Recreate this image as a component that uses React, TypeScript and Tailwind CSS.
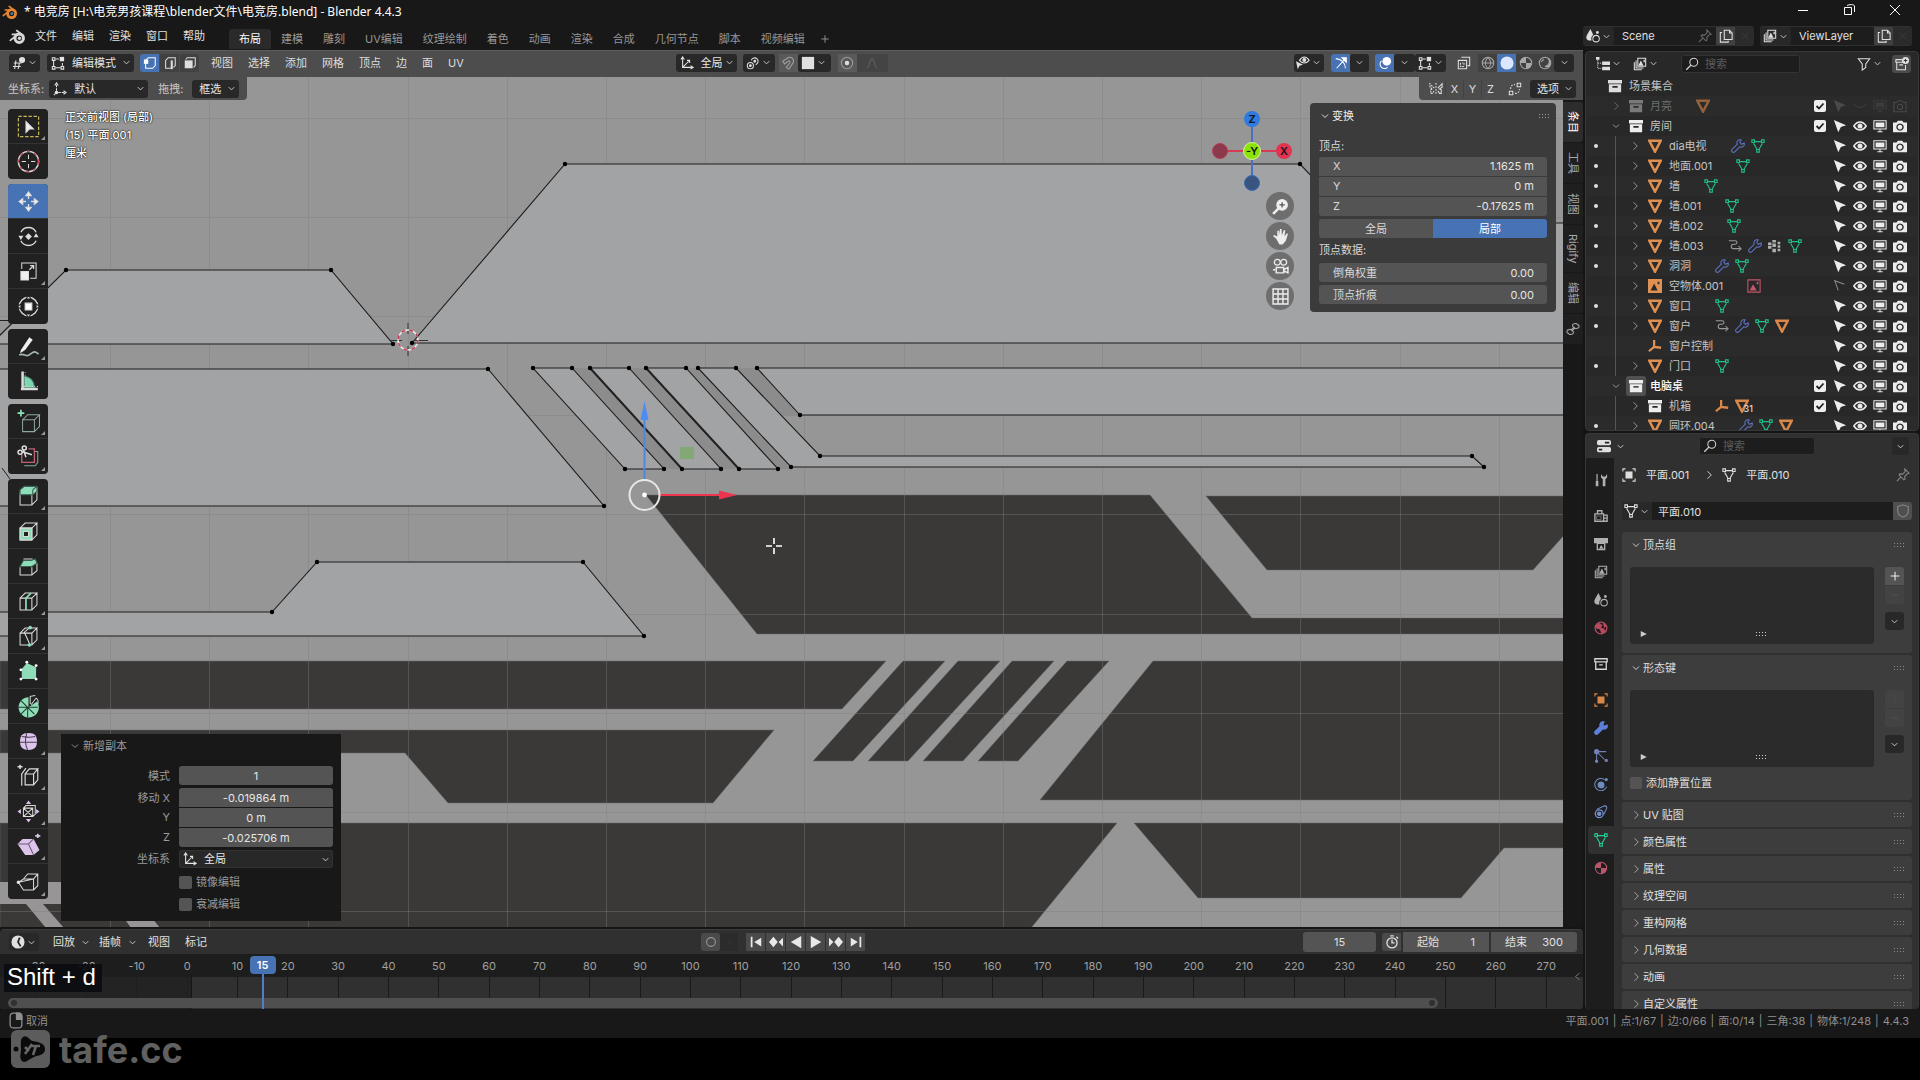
import React from 'react';

/* ---------- icons, all on a 16x16 grid ---------- */

const ICONS: Record<string, React.ReactNode> = {
  down: <path d="M4 6l4 4 4-4" />,
  right: <path d="M6 3l5 5-5 5" />,
  left: <path d="M11 3L5 8l6 5" />,
  play: <path d="M5 4l8 4-8 4z" fill="currentColor" stroke="none" />,
  plus: <path d="M8 3v10M3 8h10" />,
  minus: <path d="M4 8h8" />,
  close: <path d="M4 4l8 8M12 4l-8 8" />,
  search: <g><circle cx="10" cy="6" r="4.5" /><path d="M7 9l-5.5 5.5" strokeWidth="1.6" /></g>,
  pin: <path d="M10 1l5 5-2 .5-3 3 .3 3-1.3 1L3.5 8l1-1.3 3 .3 3-3zM5.5 10.5L1 15" />,
  copy: <g><path d="M6 1.5h6l3 3V12H6z" /><path d="M12 1.5v3h3M3.5 4H1.5v11h9v-1.5" /></g>,
  grid3d: <g><path d="M2 8h9M1 12h9M4.5 5L3 15M8.5 8L7 15" /><circle cx="11.5" cy="4.5" r="3.5" fill="currentColor" stroke="none" /></g>,
  editmode: <g><path d="M3 5v7M5 13.5h6M13 11V8M5 3.5h4" /><path d="M1.5 2h3v3h-3zM1.5 12h3v3h-3zM11.5 12h3v3h-3z" /><path d="M10 1h5v5h-5z" fill="currentColor" stroke="none" /></g>,
  vertexSel: <g><path d="M3 9v5h8l3-3V2H6L3 5" /><path d="M1 4h5v5H1z" fill="currentColor" stroke="none" /></g>,
  edgeSel: <g><path d="M9 14H3V5l3-3h8v9l-2 2" /><path d="M10 5v10" strokeWidth="2.4" /></g>,
  faceSel: <g><path d="M3 4l2-2h9v9l-2 2" /><path d="M2 5h9v9H2z" fill="currentColor" stroke="none" /></g>,
  axes: <g><path d="M3 2v11h11M3 13l7-7" /><path d="M1 4l2-3 2 3M12 11l3 2-3 2M8 5h3v3" /></g>,
  orientation: <g><path d="M4 10V3M6 12h8M3 13l-2 2" strokeDasharray="3 1" /><path d="M2 4l2-3 2 3M12 10l3 2-3 2" /><circle cx="4" cy="12" r="2" fill="currentColor" stroke="none" /></g>,
  pivot: <g><circle cx="5" cy="11" r="3.500" /><circle cx="5" cy="11" r="1" fill="currentColor" /><path d="M6 5a4 4 0 1 1 5 5" /><circle cx="10" cy="6" r="1" fill="currentColor" /></g>,
  magnet: <path d="M2 6l6-4c5-2 8 3 5 7l-4 6-3-2 4-5c1-2-1-3-2-2L4 9z" />,
  square: <path d="M1 1h14v14H1z" fill="currentColor" stroke="none" />,
  proportional: <g><circle cx="8" cy="8" r="6.5" opacity=".5" /><circle cx="8" cy="8" r="2.5" fill="currentColor" stroke="none" /></g>,
  curve: <path d="M2 14c3 0 3-11 6-11s3 11 6 11" />,
  eyeArrow: <g><path d="M4 5c3-5 8-5 11 0-3 4-8 4-11 0z" /><circle cx="9.5" cy="4.5" r="1.7" fill="currentColor" /><path d="M0 6l8 4-4 1-2 4z" fill="currentColor" stroke="none" /></g>,
  gizmo: <g><path d="M2 3c6 0 11 5 11 11M3 14L13 3" /><path d="M9 2h5v5z" fill="currentColor" /></g>,
  overlay: <g><circle cx="10" cy="6" r="5" fill="currentColor" stroke="none" /><path d="M4 5.5a5 5 0 1 0 7 7.5" /></g>,
  xray: <g><path d="M5 1.5h9.5V11H12M1.5 5H11v9.500H1.5z" /><path d="M4 8v4h4M8 10V8H6" strokeDasharray="2 1" /></g>,
  wire: <g><circle cx="8" cy="8" r="6.5" /><path d="M1.5 8h13M8 1.5c-4 4-4 9 0 13M8 1.5c4 4 4 9 0 13" /></g>,
  solid: <circle cx="8" cy="8" r="7.5" fill="currentColor" stroke="none" />,
  material: <g><circle cx="8" cy="8" r="6.5" /><path d="M8 1.5V8h6.5A6.500 6.500 0 0 1 8 14.500V8H1.5A6.500 6.500 0 0 1 8 1.500z" fill="currentColor" stroke="none" /></g>,
  rendered: <g><circle cx="8" cy="8" r="6.5" /><path d="M12 3c2 3 1 8-4 9 7 2 8-5 4-9z" fill="currentColor" /><path d="M4 7a4 4 0 0 1 3-3" /></g>,
  butterfly: <g><path d="M8 1v14" strokeDasharray="2 1.5" /><path d="M6 7L1 2v4l3 2-2 1v4h2l2-3" strokeDasharray="2 1" /><path d="M10 7l5-5v4l-3 2 2 1v4h-2l-2-3" /></g>,
  automerge: <g><path d="M10.5 1.5h4v4h-4zM1.5 10.5h4v4h-4z" /><path d="M3 8c0-4 2-5 5-5M8 13c4 0 5-2 5-5" strokeDasharray="2 1.5" /></g>,
  outliner: <g><path d="M2 1v12h4M2 7h4" strokeWidth="1" strokeDasharray="1.5 1" /><path d="M7 5h9v4H7zM7 11h9v4H7zM0 0h4v3H0z" fill="currentColor" stroke="none" /></g>,
  images: <g><path d="M5.500 1.500h9v9h-9zM3.500 4v8.500H12M1.500 6v8.500H10" /><path d="M6 10l3-6 3 6zM12 3h1.500v3H12z" fill="currentColor" stroke="none" /></g>,
  funnel: <path d="M1.5 2h13L10 8v4l-4 3V8z" />,
  newCollection: <g><path d="M8 3H1v3h9M2 6v8.500h10V9M5 9h4" /><circle cx="12" cy="4" r="4" fill="currentColor" stroke="none" /><path d="M12 2v4M10 4h4" stroke="#333" /></g>,
  collection: <path d="M0 1h16v4H0zM1 6h14v9H1zM5 8v2h6V8z" fill="currentColor" stroke="none" fillRule="evenodd" />,
  collectionLine: <path d="M1 2h14v3.500H1zM2 5.500h12V14H2zM6 9h4" strokeWidth="1.5" />,
  tri: <path d="M1.5 2h13L8 14.500z" strokeWidth="2.8" />,
  mesh: <g><path d="M4 3h8M3 5l4 7M13 5l-4 7" /><path d="M1 1h3v3H1zM12 1h3v3h-3zM6.500 12h3v3h-3z" /></g>,
  wrench: <path d="M15 4.500L12 6 10 4l1.500-3C8 0 6 3 7 6l-6 6c-1 2 1 4 3 3l6-6c3 1 6-1 5-4.500z" />,
  wrenchFill: <path d="M15 4.500L12 6 10 4l1.500-3C8 0 6 3 7 6l-6 6c-1 2 1 4 3 3l6-6c3 1 6-1 5-4.500z" fill="currentColor" />,
  bendy: <g><path d="M1 2h7c3 0 3 4 0 4H6c-3 0-3 5 0 5h8" /><path d="M12 8l3 3-3 3" /></g>,
  grid9: <path d="M0 4h4v3H0zM0 8h4v3H0zM5 1h4v3H5zM5 5h4v4H5zM5 11h4v4H5zM11 3h3v3h-3zM11 7h3v3h-3zM11 11h3v3h-3z" fill="currentColor" stroke="none" />,
  empty: <path d="M7 1v8l8 1M7 9l-6 5" strokeWidth="2.6" />,
  imageFill: <path d="M0 0h16v16H0zM3 13l4-8 4 8zM11 3h2v3h-2z" fill="currentColor" stroke="none" fillRule="evenodd" />,
  imageLine: <g><path d="M1 1h14v14H1z" /><path d="M3 13l4-7 4 7zM11 3h2v3h-2z" fill="currentColor" stroke="none" /></g>,
  cursor: <path d="M1 1l14 6-6 2-3 6z" fill="currentColor" stroke="none" />,
  cursorLine: <path d="M13 6L2 2l4 11" />,
  eye: <g><path d="M1 8c4-6 10-6 14 0-4 6-10 6-14 0z" strokeWidth="1.8" /><circle cx="8" cy="8" r="2.300" fill="currentColor" /></g>,
  eyeClosed: <path d="M1 6c4 5 10 5 14 0" />,
  monitor: <g><path d="M1 2h14v9.500H1zM5 14.500h6M8 12v2" /><path d="M3 4h10v5.500H3z" fill="currentColor" stroke="none" /></g>,
  camera: <path d="M0 4h4l1.500-2h5L12 4h4v11H0zM8 5a4.200 4.200 0 1 0 .1 0zM8 6.500a2.700 2.700 0 1 1-.1 0z" fill="currentColor" stroke="none" fillRule="evenodd" />,
  cameraLine: <g><path d="M1 4h3l2-2h4l2 2h3v10.500H1z" /><circle cx="8" cy="9" r="3" /></g>,
  props: <g fill="currentColor" stroke="none"><rect x="0" y="1" width="16" height="6" rx="2" /><rect x="0" y="9" width="16" height="6" rx="2" /><path d="M9 3h5v2H9zM2 11h4v2H2z" fill="#222" /></g>,
  object: <g><path d="M1 4V1h3M12 1h3v3M15 12v3h-3M4 15H1v-3" /><path d="M4 4h8v8H4z" fill="currentColor" stroke="none" /></g>,
  shield: <path d="M8 1l6 2v5c0 4-3 6-6 7-3-1-6-3-6-7V3z" />,
  tools: <g><path d="M3.500 1v8" strokeWidth="1.4" /><path d="M2 9h3v6H2z" fill="currentColor" stroke="none" /><path d="M8 1v4l2 2v8h3V7l2-2V1l-2 3h-3z" fill="currentColor" stroke="none" /></g>,
  render: <g><path d="M1 5.500h10V14H1zM4 5V2h5v3M11 7h4v7h-4M11 10.500h4" strokeWidth="1.5" /><path d="M3 8h5v4H3z" opacity=".5" /></g>,
  output: <path d="M0 1h16v6h-3v8H3V7H0zM4.500 8v5.500h7V8zM6 13l2-4 3 4z" fill="currentColor" stroke="none" fillRule="evenodd" />,
  scene: <g><path d="M5 0l4 8c1 3-1 5-3 5H3c-3-1-3-4-2-6z" fill="currentColor" stroke="none" /><circle cx="11.500" cy="11" r="4" stroke="#1d1d1d" strokeWidth="3" /><circle cx="11.500" cy="11" r="3.700" /><circle cx="13" cy="4" r="1.600" fill="currentColor" stroke="none" /></g>,
  world: <g><circle cx="8" cy="8" r="6.7" strokeWidth="1.5" /><path d="M2 5l4-2 3 2-2 3 4 1 2 3-4 2-2-5-4-1zM11 3l3 2-2 2z" fill="currentColor" /></g>,
  particles: <g><circle cx="3" cy="3" r="2.400" fill="currentColor" /><path d="M5 3h9M3 5v8M5 5l7 7" /><circle cx="3" cy="14" r="1.300" fill="currentColor" /><circle cx="14" cy="13" r="1.300" fill="currentColor" /></g>,
  physics: <g><circle cx="8" cy="9" r="3.400" fill="currentColor" /><path d="M12 3A7 7 0 1 0 14.500 11" /><circle cx="14" cy="3" r="1.200" fill="currentColor" /></g>,
  constraint: <g><circle cx="6" cy="10" r="4.500" strokeWidth="1.5" /><circle cx="6" cy="10" r="2" fill="currentColor" /><path d="M3 5l9-4c3 0 3 2 2 4l-3 6" /></g>,
  clock: <g><circle cx="8" cy="8" r="7.500" fill="currentColor" stroke="none" /><path d="M10 3L8 8l3 5" stroke="#222" strokeWidth="2" /></g>,
  circle: <circle cx="8" cy="8" r="5" />,
  first: <path d="M2 2h2v12H2zM14 3v10L6 8z" fill="currentColor" stroke="none" />,
  last: <path d="M12 2h2v12h-2zM2 3v10l8-5z" fill="currentColor" stroke="none" />,
  prevKey: <path d="M5 2l5 6-5 6-5-6zM16 3v10l-5-5z" fill="currentColor" stroke="none" />,
  nextKey: <path d="M11 2l5 6-5 6-5-6zM0 3v10l5-5z" fill="currentColor" stroke="none" />,
  back: <path d="M14 1v14L2 8z" fill="currentColor" stroke="none" />,
  fwd: <path d="M2 1v14l12-7z" fill="currentColor" stroke="none" />,
  stopwatch: <g><circle cx="8" cy="9" r="5.800" strokeWidth="1.5" /><path d="M8 5v4h3M6 1h4M13 2l2 2" strokeWidth="1.5" /></g>,
  mouse: <g><rect x="2" y="1" width="11" height="14" rx="3" /><path d="M8 1h2c2 0 3 1 3 3v3H8z" fill="currentColor" /></g>,
  zoom: <g><circle cx="9.500" cy="6.500" r="5.500" fill="currentColor" stroke="none" /><path d="M6 10l-5 5" strokeWidth="2.4" /><path d="M9.500 4v5M7 6.500h5" stroke="#555" /></g>,
  hand: <path d="M4 10L1 7.500l1-1L5 8V2.500h1.500V7L7.500 1H9l.3 6L11 2h1.500l-.8 6L14 5l1 .7-2 6.300-3 3.500H7z" fill="currentColor" stroke="none" />,
  cameraView: <g><circle cx="5" cy="4" r="2.800" /><circle cx="11" cy="4" r="2.800" /><path d="M4 9h7v5H4zM11 11l4-2v5l-4-2M1 11h2" strokeWidth="1.4" /></g>,
  grid: <path d="M1 1h14v14H1zM1 5.700h14M1 10.300h14M5.700 1v14M10.300 1v14" strokeWidth="1.3" />,
  bone: <path d="M10 2a2 2 0 0 1 3 1 2 2 0 0 1 0 4 2 2 0 0 1-3 0l-3 3a2 2 0 0 1-1 4 2 2 0 0 1-3-1 2 2 0 0 1 0-4 2 2 0 0 1 3 0l3-3a2 2 0 0 1 1-4z" />,
};

function Icon({ name, className = '', size = 14 }: { name: string; className?: string; size?: number }) {
  return (
    <svg width={size} height={size} viewBox="0 0 16 16" fill="none" stroke="currentColor" strokeWidth="1.2" className={`shrink-0 ${className}`} aria-hidden="true">
      {ICONS[name]}
    </svg>
  );
}

function Grip({ className = 'text-[#7a7a7a]' }: { className?: string }) {
  return (
    <svg width="12" height="6" viewBox="0 0 12 6" fill="currentColor" className={`shrink-0 ${className}`} aria-hidden="true">
      {[0, 3, 6, 9].map((x) => [1, 4].map((y) => <rect key={`${x}-${y}`} x={x} y={y} width="1" height="1" />))}
    </svg>
  );
}

function BlenderLogo({ size, blue, main }: { size: number; blue: string; main: string }) {
  return (
    <svg width={size} height={size} viewBox="0 0 20 20" fill="none" stroke={main} strokeLinecap="round" aria-hidden="true">
      <circle cx="12" cy="12" r="5" strokeWidth="3.5" />
      <circle cx="12.300" cy="12" r="2" fill={blue} stroke="none" />
      <path d="M9 3l8 6M4 7.500h8M1.500 14.500L9 8.500" strokeWidth="2" />
    </svg>
  );
}

/* ---------- small controls ---------- */

function IconButton({ name, label, className = '' }: { name: string; label: string; className?: string }) {
  return (
    <button type="button" aria-label={label} className={`flex h-[18px] w-[19px] items-center justify-center ${className}`}>
      <Icon name={name} />
    </button>
  );
}

function Drop({ name, label, className = 'w-[30px]' }: { name?: string; label: string; className?: string }) {
  return (
    <button type="button" aria-label={label} className={`flex h-[18px] items-center justify-center gap-px rounded-[3px] bg-[#282828] text-[#e0e0e0] ${className}`}>
      {name && <Icon name={name} />}
      <Icon name="down" size={11} />
    </button>
  );
}

function Select({ icon, label, value, className = '' }: { icon?: string; label: string; value: string; className?: string }) {
  return (
    <span className={`relative flex h-[18px] items-center rounded-[3px] bg-[#282828] text-[#e5e5e5] ${className}`}>
      {icon && <Icon name={icon} className="ml-1" />}
      <select aria-label={label} defaultValue={value} className="h-full w-full min-w-0 appearance-none bg-transparent pl-[7px] outline-none">
        <option>{value}</option>
      </select>
      <Icon name="down" size={11} className="pointer-events-none absolute right-[2px]" />
    </span>
  );
}

/* ---------- window chrome ---------- */

const MENUS = ['文件', '编辑', '渲染', '窗口', '帮助'];
const WORKSPACES = ['布局', '建模', '雕刻', 'UV编辑', '纹理绘制', '着色', '动画', '渲染', '合成', '几何节点', '脚本', '视频编辑'];

function TitleBar() {
  return (
    <header className="flex h-6 shrink-0 items-center bg-[#181818] pl-[2px] pb-px text-white">
      <BlenderLogo size={16} blue="#3c78b4" main="#e8862e" />
      <span className="ml-[6px] font-['Noto_Sans','Noto_Sans_CJK_SC',sans-serif] text-xs">* 电竞房 [H:\电竞男孩课程\blender文件\电竞房.blend] - Blender 4.4.3</span>
      <div className="ml-auto flex pr-[2px] pb-1">
        <button type="button" aria-label="最小化" className="flex h-5 w-[46px] items-center justify-center"><svg width="10" height="10" stroke="currentColor"><path d="M0 5.500h10" /></svg></button>
        <button type="button" aria-label="还原" className="flex h-5 w-[46px] items-center justify-center"><svg width="11" height="11" stroke="currentColor" fill="none"><path d="M.5 3.500h7v7h-7zM3 1.500C5 .5 10 0 10.500 2v6" /></svg></button>
        <button type="button" aria-label="关闭" className="flex h-5 w-[46px] items-center justify-center"><svg width="10" height="10" stroke="currentColor"><path d="M0 0l10 10M10 0L0 10" /></svg></button>
      </div>
    </header>
  );
}

function IdField({ icon, label, value, pin, className }: { icon: string; label: string; value: string; pin?: boolean; className: string }) {
  return (
    <div className={`flex h-5 items-center overflow-hidden rounded-[3px] bg-[#1d1d1d] text-[#e0e0e0] ring-1 ring-[#303030] ring-inset ${className}`}>
      <Drop name={icon} label={label} className="w-[31px]" />
      <input aria-label={label} defaultValue={value} className="min-w-0 flex-1 bg-transparent pl-2 outline-none" />
      {pin && <Icon name="pin" className="mr-1 text-[#6a6a6a]" />}
      <IconButton name="copy" label="新建" className="bg-[#404040]" />
      <IconButton name="close" label="删除" className="bg-[#2b2b2b] text-[#393939]" />
    </div>
  );
}

function MenuBar() {
  return (
    <nav className="flex h-[26px] shrink-0 items-center bg-[#181818] text-[#e0e0e0]">
      <button type="button" aria-label="Blender" className="ml-[9px] mr-[9px] pb-[2px]"><BlenderLogo size={17} blue="#d8d8d8" main="#d8d8d8" /></button>
      <div className="flex gap-[15px] pb-[2px]">
        {MENUS.map((m) => <button type="button" key={m}>{m}</button>)}
      </div>
      <div className="ml-6 flex pt-1 text-[#979797]">
        {WORKSPACES.map((w, i) => (
          <button type="button" key={w} className={`h-5 rounded-t-[3px] px-[10px] ${i === 0 ? 'bg-[#2a2a2a] text-white' : ''}`}>{w}</button>
        ))}
        <button type="button" aria-label="添加工作区" className="px-1"><Icon name="plus" size={12} /></button>
      </div>
      <div className="ml-auto flex gap-[6px] pr-2 pb-[2px]">
        <IdField icon="scene" label="场景" value="Scene" pin className="w-[171px]" />
        <IdField icon="images" label="视图层" value="ViewLayer" className="w-[152px]" />
      </div>
    </nav>
  );
}

/* ---------- 3D viewport drawing ---------- */

const DARK_SHAPES = [
  '646,495 1150,495 1252,618 1590,618 1590,634 757,634',
  '1206,496 1590,496 1584,513 1533,570 1267,570',
  '0,661 886,661 842,709 0,709',
  '0,730 774,730 713,803 448,803 405,753 0,753',
  '903,661 945,661 853,761 813,761',
  '958,661 1000,661 908,761 868,761',
  '1012,661 1054,661 963,761 923,761',
  '1067,661 1109,661 1018,761 978,761',
  '1153,661 1590,661 1590,800 1040,800',
  '0,823 1117,823 1031,928 0,928',
  '1134,823 1590,823 1590,848 1504,848 1461,898 1198,898',
];

const MESH_FACES = [
  '-9,344 66,270 331,270 393,344',
  '412,343 565,164 1300,164 1356,223 1590,223 1590,343',
  '-9,369 488,369 604,506 -9,506',
  '-9,612 272,612 317,562 583,562 644,636 -9,636',
  '533,368 572,368 664,469 625,469',
  '590,368 629,368 721,469 682,469',
  '646,368 686,368 778,469 739,469',
  '698,368 736,368 820,456 1472,456 1484,467 791,467',
  '757,368 1590,368 1590,415 800,415',
];

const VERTICES = [
  [66, 270], [331, 270], [393, 344], [412, 343], [565, 164], [1300, 164], [488, 369], [604, 506],
  [272, 612], [317, 562], [583, 562], [644, 636], [533, 368], [572, 368], [664, 469], [625, 469],
  [590, 368], [629, 368], [721, 469], [682, 469], [646, 368], [686, 368], [778, 469], [739, 469],
  [698, 368], [736, 368], [820, 456], [1472, 456], [1484, 467], [791, 467], [757, 368], [800, 415],
];

function Canvas() {
  return (
    <svg className="absolute inset-0 h-full w-full" viewBox="0 50 1583 877" preserveAspectRatio="xMinYMin slice" aria-hidden="true">
      <rect x="0" y="50" width="1590" height="900" fill="#969696" />
      <g fill="#3b3938" stroke="#6a6969" strokeOpacity=".5">
        {DARK_SHAPES.map((p) => <polygon key={p} points={p} />)}
      </g>
      <g fill="#979595">
        <polygon points="0,882 62,882 62,904 43,904 64,928 46,928 26,904 0,904" />
        <polygon points="124,918 152,918 160,928 131,928" />
      </g>
      <g stroke="#7c7c7c" strokeOpacity=".4">
        {Array.from({ length: 15 }, (_, i) => <path key={i} d={`M${Math.round(110 + i * 99.2)}.5 50V928`} />)}
        {Array.from({ length: 9 }, (_, i) => <path key={i} d={`M0 ${Math.round(118 + i * 99.1)}.5H1590`} />)}
      </g>
      <g fill="#8c8c8c">
        <polygon points="572,368 590,368 682,469 664,469" />
        <polygon points="629,368 646,368 739,469 721,469" />
        <polygon points="686,368 698,368 791,469 778,469" />
        <polygon points="736,368 757,368 800,415 781,415" />
      </g>
      <g fill="#a1a3a4" stroke="#1c1c1c" strokeWidth="1.1">
        {MESH_FACES.map((p) => <polygon key={p} points={p} />)}
      </g>
      <g stroke="#222" strokeWidth="2">
        <path d="M590 368l92 101M646 368l93 101" />
      </g>
      <path d="M0 320.500h9M2 468l8 11" stroke="#222" />
      <g fill="#000">
        {VERTICES.map(([x, y]) => <circle key={`${x},${y}`} cx={x} cy={y} r="2.2" />)}
      </g>

      {/* 3D cursor */}
      <path d="M408 323v11M408 346v10M391 340.500h11M414 340.500h14" stroke="#333" />
      <circle cx="408" cy="340" r="10" fill="none" stroke="#eee" strokeWidth="1.4" />
      <circle cx="408" cy="340" r="10" fill="none" stroke="#c2354b" strokeWidth="1.4" strokeDasharray="4 4" />

      {/* move gizmo */}
      <path d="M644.500 479v-60" stroke="#4e86e4" strokeWidth="2" />
      <polygon points="640.500,420 648.500,420 644.500,401" fill="#4e8bf5" />
      <path d="M660 495h62" stroke="#ee3550" strokeWidth="2" />
      <polygon points="719,490.500 719,499.500 737,495" fill="#ee3550" />
      <rect x="680" y="447" width="14" height="12" fill="#79a965" fillOpacity=".75" />
      <circle cx="644.500" cy="495" r="15" fill="none" stroke="#e8e8e8" strokeWidth="2" />
      <circle cx="644.500" cy="495" r="2.4" fill="#fff" />
      <path d="M774 538v6M774 548v6M766 546h6M776 546h6" stroke="#fff" strokeWidth="1.6" />
    </svg>
  );
}

function AxisGizmo() {
  return (
    <svg width="84" height="84" viewBox="0 0 84 84" aria-label="坐标轴" className="text-[11px] font-semibold">
      <path d="M42 10v64" stroke="#4a6fc0" strokeWidth="2" />
      <path d="M10 42h64" stroke="#d73a55" strokeWidth="2" />
      <circle cx="42" cy="10" r="8" fill="#2f7be0" />
      <circle cx="42" cy="74" r="7.5" fill="#3a5480" stroke="#3a68b8" />
      <circle cx="10" cy="42" r="7.5" fill="#8a3a4c" stroke="#b83a52" />
      <circle cx="74" cy="42" r="8" fill="#e23350" />
      <circle cx="42" cy="42" r="8.5" fill="#8be30a" stroke="#d6f59a" />
      <g fill="#10151c" textAnchor="middle">
        <text x="42" y="14">Z</text>
        <text x="74" y="46">X</text>
        <text x="42" y="46">-Y</text>
      </g>
    </svg>
  );
}

/* ---------- toolbar ---------- */

const cube = <path d="M6 12h14v14H6zM6 12l6-6h14l-6 6M26 6v14l-6 6" />;

const TOOLS: { label: string; more?: boolean; art: React.ReactNode }[][] = [
  [
    { label: '框选', more: true, art: <g><rect x="4" y="4" width="24" height="24" stroke="#c8b85a" strokeWidth="1.4" strokeDasharray="4 2" /><path d="M13 10v13l4-4h5z" fill="#eee" /></g> },
    { label: '游标', art: <g><circle cx="16" cy="16" r="12" strokeWidth="1.6" /><circle cx="16" cy="16" r="12" stroke="#c05060" strokeWidth="1.6" strokeDasharray="4 5" /><path d="M16 8v5M16 19v5M8 16h5M19 16h5" /></g> },
  ],
  [
    { label: '移动', art: <path d="M16 9v4M16 19v4M9 16h4M19 16h4M16 5l-3 4h6zM16 27l-3-4h6zM5 16l4-3v6zM27 16l-4-3v6z" fill="#fff" strokeWidth="1.6" /> },
    { label: '旋转', art: <g><path d="M7 11a10 10 0 0 1 18 0M25 21a10 10 0 0 1-18 0" strokeWidth="1.6" /><path d="M16 12l4 4-4 4-4-4zM4 15h6l-3 5zM28 17h-6l3-5z" fill="#ddd" stroke="none" /></g> },
    { label: '缩放', more: true, art: <g><path d="M8 13V6h17v18h-7" /><path d="M7 16h9v10H7z" fill="#eee" /><path d="M17 14l5-5M18 9h4v4" strokeWidth="1.5" /></g> },
    { label: '变换', art: <g><circle cx="16" cy="16" r="11" strokeWidth="1.6" /><path d="M12 12h8v8h-8z" fill="#fff" /><path d="M16 3l-3 4h6zM16 29l-3-4h6zM3 16l4-3v6zM29 16l-4-3v6z" fill="#ddd" stroke="#222" /></g> },
  ],
  [
    { label: '标注', more: true, art: <g><path d="M7 20L17 5l4 3-9 12-6 4z" fill="#eee" stroke="none" /><path d="M5 26c5-3 8 3 12 0s6-6 11-1" strokeWidth="2" stroke="#a8b8b0" /></g> },
    { label: '测量', art: <g><path d="M11 23V10c7 0 12 6 12 13z" fill="#7fd6ae" stroke="#4a8a72" /><path d="M9 4v22M7 25h20" strokeWidth="3" /><path d="M12 5v18M11 22h16" strokeDasharray="1 2" /></g> },
  ],
  [
    { label: '添加立方体', more: true, art: <g><g stroke="#8fa89a" transform="translate(3 2)">{cube}</g><path d="M7 2v8M3 6h8" stroke="#8fe3b8" strokeWidth="2" /></g> },
    { label: '切割', more: true, art: <g><path d="M11 27h13l3-4V10h-4" stroke="#7fae98" /><path d="M8 12v11h15V7h-7" stroke="#c06070" strokeWidth="1.6" /><path d="M8 10l12 4M10 8l3 9" strokeWidth="1.8" /><circle cx="6" cy="11" r="2.4" strokeWidth="1.8" /><circle cx="11" cy="6" r="2.4" strokeWidth="1.8" /></g> },
  ],
  [
    { label: '挤出', more: true, art: <g>{cube}<path d="M6 8l5-4h15v6l-5 4H6zM21 8v6M21 8l5-4" fill="#8fdcb8" stroke="#3a5f50" /></g> },
    { label: '内插面', art: <g>{cube}<path d="M6 12h14v14H6zM10 16v6h6v-6z" fill="#8fdcb8" fillRule="evenodd" /></g> },
    { label: '倒角', art: <g><path d="M6 17v9h14v-9M20 26l6-5v-9M10 7h11" /><path d="M6 16l4-7h9l5-2 2 5-6 4z" fill="#8fdcb8" stroke="#3a5f50" /></g> },
    { label: '环切', more: true, art: <g>{cube}<path d="M13 26V12l6-6" stroke="#8fdcb8" strokeWidth="2" /></g> },
    { label: '切刀', more: true, art: <g>{cube}<path d="M18 5l-7 6 7 15" /><circle cx="18" cy="5.5" r="1.5" fill="#8fdcb8" stroke="#8fdcb8" /><circle cx="17" cy="26" r="1.5" fill="#8fdcb8" stroke="#8fdcb8" /></g> },
    { label: '多边形建形', art: <g><path d="M8 13l6-7 11 5v14H8z" fill="#8fdcb8" stroke="none" /><g fill="#fff" stroke="none"><circle cx="7" cy="14" r="1.7" /><circle cx="14" cy="5" r="1.7" /><circle cx="25" cy="9" r="1.7" /><circle cx="25" cy="25" r="1.7" /><circle cx="7" cy="25" r="1.7" /></g></g> },
    { label: '旋绕', art: <g><path d="M16 17V5a12 12 0 1 0 10 5z" fill="#8fdcb8" stroke="none" /><path d="M15 17v12M15 17H4M15 17h12M15 17l-8 8M15 17l8 8M15 17L7 9" stroke="#23382f" /><path d="M18 13V4l6-1M19 14l6-8c3 2 3 4 2 7" /></g> },
    { label: '平滑', more: true, art: <g><path d="M16 6c8 0 10 4 10 10s-2 10-10 10S6 22 6 16 8 6 16 6z" fill="#dcc4ea" stroke="none" /><path d="M6 17h20M14 6c-2 6-2 14 1 20M8 10c5 1 12 1 16 0" stroke="#4a3f52" /></g> },
    { label: '滑移边线', more: true, art: <g><path d="M12 13h10v13H12zM12 13l5-6h10l-5 6M27 7v13l-5 6M8 27V13l5-7" strokeWidth="1.4" /><path d="M6 2v5M3 4.500h6" strokeWidth="1.8" /></g> },
    { label: '法向缩放', more: true, art: <g><path d="M10 12h11v10H10zM10 12l3-3h11v10l-3 3M10 12l11 10M21 12L10 22" /><path d="M16 3l-3 4h6zM16 29l-3-4h6zM3 16l4-3v6zM29 16l-4-3v6z" fill="#dcc4ea" stroke="none" /></g> },
    { label: '切变', more: true, art: <g><path d="M3 13l6-6h13l7 13-7 6H12z" fill="#dcc4ea" stroke="none" /><path d="M3 13h13l6 13M16 13l6-6" stroke="#6a5a74" /><path d="M27 1v5M24 3.500h6" stroke="#dcc4ea" strokeWidth="2" /></g> },
    { label: '断离区域', more: true, art: <g><path d="M4 17l6 9h12l5-5V7H15l-5 6M22 26V13l5-6M4 17l6-4h12M4 17l18-4" /><circle cx="4" cy="17" r="1.5" fill="#fff" /></g> },
  ],
];

function Toolbar() {
  return (
    <div className="ml-2 mt-[9px] flex w-10 shrink-0 flex-col gap-[5px]">
      {TOOLS.map((group, g) => (
        <div key={g} className="flex flex-col divide-y divide-[#333] overflow-hidden rounded-[4px] bg-[#212121]">
          {group.map((t) => (
            <button key={t.label} type="button" aria-label={t.label} className={`relative flex h-[35px] items-center justify-center ${t.label === '移动' ? 'bg-[#4772b3]' : ''}`}>
              <svg width="27" height="27" viewBox="0 0 32 32" fill="none" stroke="#dcdcdc" strokeWidth="1.2" aria-hidden="true">{t.art}</svg>
              {t.more && <svg width="4" height="4" className="absolute bottom-[3px] right-[3px]"><path d="M4 0v4H0z" fill="#999" /></svg>}
            </button>
          ))}
        </div>
      ))}
    </div>
  );
}

/* ---------- viewport ---------- */

const VIEW_MENUS = ['视图', '选择', '添加', '网格', '顶点', '边', '面', 'UV'];

function ViewportHeader() {
  return (
    <>
      <div className="flex h-[27px] items-center border-t border-[#5e5e5e] bg-[#4d4d4d] px-[9px] pb-[3px] text-[#dedede]">
        <div className="flex flex-1 items-center">
          <Drop name="grid3d" label="编辑器类型" className="w-[31px]" />
          <Select icon="editmode" label="模式" value="编辑模式" className="ml-[7px] w-[87px]" />
          <div className="ml-[6px] flex gap-px">
            <IconButton name="vertexSel" label="点选择" className="rounded-l-[3px] bg-[#4772b3] text-white" />
            <IconButton name="edgeSel" label="边选择" className="bg-[#414141]" />
            <IconButton name="faceSel" label="面选择" className="rounded-r-[3px] bg-[#414141]" />
          </div>
          <div className="ml-3 flex gap-[15px]">
            {VIEW_MENUS.map((m) => <button type="button" key={m}>{m}</button>)}
          </div>
        </div>
        <div className="mr-5 flex items-center">
          <Select icon="axes" label="变换坐标系" value="全局" className="w-[61px]" />
          <Drop name="pivot" label="轴心点" className="ml-[6px] w-[32px]" />
          <IconButton name="magnet" label="吸附" className="ml-[4px] bg-[#5a5a5a] text-[#a0a0a0]" />
          <Drop name="square" label="吸附到" className="w-[33px]" />
          <IconButton name="proportional" label="衰减编辑" className="ml-[7px] bg-[#5a5a5a]" />
          <span className="flex h-[18px] w-[31px] items-center justify-center bg-[#444] text-[#5e5e5e]"><Icon name="curve" /></span>
        </div>
        <div className="flex flex-1 items-center justify-end">
          <Drop name="eyeArrow" label="可选性与可见性" />
          <IconButton name="gizmo" label="显示 Gizmo" className="ml-[7px] rounded-l-[3px] bg-[#4772b3] text-white" />
          <Drop label="Gizmo" className="w-[19px]" />
          <IconButton name="overlay" label="显示叠加层" className="ml-[6px] rounded-l-[3px] bg-[#4772b3] text-white" />
          <Drop label="叠加层" className="w-[21px]" />
          <Drop name="editmode" label="编辑模式叠加层" className="w-[31px]" />
          <IconButton name="xray" label="透视模式" className="ml-2" />
          <div className="ml-[5px] flex">
            <IconButton name="wire" label="线框" className="bg-[#414141] text-[#a8a8a8]" />
            <IconButton name="solid" label="实体" className="bg-[#4772b3] text-[#dbe6ff]" />
            <IconButton name="material" label="材质预览" className="bg-[#414141] text-[#a8a8a8]" />
            <IconButton name="rendered" label="渲染" className="bg-[#414141] text-[#a8a8a8]" />
            <Drop label="着色方式" className="w-[20px]" />
          </div>
        </div>
      </div>
      <div className="flex justify-between text-[#dedede]">
        <div className="flex h-[23px] items-center rounded-br-[4px] bg-[#4d4d4d] px-2">
          <span className="text-[#c8c8c8]">坐标系:</span>
          <Select icon="orientation" label="坐标系" value="默认" className="ml-[5px] w-[99px]" />
          <span className="ml-[10px] text-[#c8c8c8]">拖拽:</span>
          <Select label="拖拽" value="框选" className="ml-[9px] w-[47px]" />
        </div>
        <div className="flex h-[23px] items-center rounded-bl-[4px] bg-[#4d4d4d] px-[7px]">
          <IconButton name="butterfly" label="镜像" />
          {['X', 'Y', 'Z'].map((a) => (
            <button type="button" key={a} className="h-[18px] w-[18px] border-l border-[#424242]">{a}</button>
          ))}
          <IconButton name="automerge" label="自动合并" className="ml-[6px]" />
          <Select label="选项" value="选项" className="ml-[6px] w-[46px]" />
        </div>
      </div>
    </>
  );
}

function SidePanel() {
  return (
    <section className="mt-[3px] h-[209px] w-[246px] shrink-0 rounded-[4px] bg-[#3b3b3b] px-[9px] text-[#d8d8d8]">
      <h2 className="flex h-[26px] items-center text-[#eee]">
        <Icon name="down" size={12} className="mr-px" />变换<Grip className="ml-auto mr-[-4px] text-[#999]" />
      </h2>
      <p className="mt-2 h-5 leading-[19px]">顶点:</p>
      <div className="flex flex-col gap-px overflow-hidden rounded-[3px]">
        {[['X', '1.1625 m'], ['Y', '0 m'], ['Z', '-0.17625 m']].map(([axis, value]) => (
          <label key={axis} className="flex h-[19px] items-center bg-[#545454] pb-px pl-[14px] pr-[13px]">
            {axis}
            <input defaultValue={value} className="min-w-0 flex-1 bg-transparent text-right text-[#e5e5e5] outline-none" />
          </label>
        ))}
      </div>
      <div className="mt-[3px] flex h-[19px] overflow-hidden rounded-[3px]">
        <button type="button" className="flex-1 bg-[#545454]">全局</button>
        <button type="button" className="flex-1 bg-[#4772b3] text-white">局部</button>
      </div>
      <p className="h-[25px] leading-[25px]">顶点数据:</p>
      <div className="flex flex-col gap-[3px]">
        {['倒角权重', '顶点折痕'].map((l) => (
          <label key={l} className="flex h-[19px] items-center rounded-[3px] bg-[#545454] pl-[14px] pr-[13px] whitespace-nowrap">
            {l}
            <input defaultValue="0.00" className="min-w-0 flex-1 bg-transparent text-right text-[#e5e5e5] outline-none" />
          </label>
        ))}
      </div>
    </section>
  );
}

function RedoPanel() {
  const field = 'w-full bg-[#545454] text-center text-[#e5e5e5] outline-none';
  return (
    <section className="absolute bottom-[6px] left-[61px] h-[187px] w-[280px] bg-[#181818] px-2 text-[#9a9a9a]">
      <h2 className="flex h-[23px] items-center gap-[2px]"><Icon name="down" size={12} />新增副本</h2>
      <div className="mt-[9px] grid grid-cols-[101px_154px] items-center gap-x-[9px] text-right">
        <label htmlFor="mode">模式</label>
        <input id="mode" defaultValue="1" className={`h-[19px] rounded-[3px] ${field}`} />
        <label htmlFor="dx" className="mt-[3px]">移动 X</label>
        <input id="dx" defaultValue="-0.019864 m" className={`mt-[3px] h-[19px] rounded-t-[3px] ${field}`} />
        <label htmlFor="dy">Y</label>
        <input id="dy" defaultValue="0 m" className={`mt-px h-[19px] ${field}`} />
        <label htmlFor="dz">Z</label>
        <input id="dz" defaultValue="-0.025706 m" className={`mt-px h-[19px] rounded-b-[3px] ${field}`} />
        <span className="mt-[3px]">坐标系</span>
        <Select icon="axes" label="坐标系" value="全局" className="mt-[3px] ring-1 ring-[#333] ring-inset" />
      </div>
      <div className="ml-[110px] flex flex-col pt-[3px]">
        {['镜像编辑', '衰减编辑'].map((l) => (
          <label key={l} className="flex h-[22px] items-center gap-1">
            <input type="checkbox" className="size-[13px] appearance-none rounded-[2px] bg-[#545454]" />{l}
          </label>
        ))}
      </div>
    </section>
  );
}

function Viewport() {
  return (
    <section className="relative flex min-h-0 flex-1 flex-col overflow-hidden">
      <Canvas />
      <div className="relative flex min-h-0 flex-1 flex-col">
        <ViewportHeader />
        <div className="flex min-h-0 flex-1">
          <Toolbar />
          <div className="ml-[17px] mt-2 leading-[18px] font-medium text-white [text-shadow:0_0_2px_#000,0_0_1px_#000]">
            <p>正交前视图 (局部)</p>
            <p>(15) 平面.001</p>
            <p>厘米</p>
          </div>
          <div className="ml-auto flex w-[100px] flex-col items-center pt-[9px]">
            <AxisGizmo />
            <div className="-mt-px ml-14 flex flex-col gap-[2px]">
              {[['zoom', '缩放视图'], ['hand', '平移视图'], ['cameraView', '摄像机视角'], ['grid', '切换正交']].map(([n, l]) => (
                <button key={n} type="button" aria-label={l} className="flex size-7 items-center justify-center rounded-full bg-[#6e6e6e] text-[#eee]"><Icon name={n} size={17} /></button>
              ))}
            </div>
          </div>
          <div className="ml-2"><SidePanel /></div>
          <div className="ml-[7px] flex w-5 flex-col bg-[#181818] pt-[2px] text-[#a8a8a8]">
            {['条目', '工具', '视图', 'Rigify', '编辑'].map((t, i) => (
              <button type="button" key={t} className={`mb-px flex items-center justify-center rounded-r-[3px] pt-[9px] pb-[9px] ${i === 0 ? 'bg-[#2c2c2c] text-white' : 'bg-[#1f1f1f]'}`}>
                <span className="[text-orientation:sideways] [writing-mode:vertical-rl]">{t}</span>
              </button>
            ))}
            <button type="button" aria-label="骨骼" className="flex h-[30px] items-center justify-center rounded-r-[3px] bg-[#1f1f1f]"><Icon name="bone" /></button>
          </div>
        </div>
      </div>
      <RedoPanel />
    </section>
  );
}

/* ---------- timeline ---------- */

const FRAMES = Array.from({ length: 31 }, (_, i) => (i - 3) * 10);
// share of the ruler width at which a frame number falls
const framePos = (f: number) => `${((f + 35) / 310) * 100}%`;

function Timeline() {
  return (
    <section className="relative mt-[2px] flex h-20 shrink-0 flex-col overflow-hidden rounded-[4px] bg-[#303030] text-[#e0e0e0]">
      <div className="flex h-[25px] items-center border-t border-[#3d3d3d] pl-[9px] pr-[6px]">
        <div className="flex flex-1 items-center">
          <Drop name="clock" label="编辑器类型" className="w-[30px]" />
          <button type="button" className="ml-[14px] flex items-center gap-[5px]">回放<Icon name="down" size={11} /></button>
          <button type="button" className="ml-2 flex items-center gap-[6px]">插帧<Icon name="down" size={11} /></button>
          <button type="button" className="ml-[10px]">视图</button>
          <button type="button" className="ml-[15px]">标记</button>
        </div>
        <div className="mr-5 flex items-center">
          <IconButton name="circle" label="自动插帧" className="rounded-[3px] bg-[#4a4a4a] text-[#999]" />
          <span className="mr-[8px] flex h-[18px] w-[18px] items-center justify-center bg-[#2b2b2b] text-[#3c3c3c]"><Icon name="down" size={9} /></span>
          <div className="flex gap-px">
            {[['first', '首帧'], ['prevKey', '上一关键帧'], ['back', '倒放'], ['fwd', '播放'], ['nextKey', '下一关键帧'], ['last', '末帧']].map(([n, l]) => (
              <IconButton key={n} name={n} label={l} className="bg-[#4a4a4a] text-[#e8e8e8]" />
            ))}
          </div>
        </div>
        <div className="flex flex-1 items-center justify-end gap-[2px]">
          <input aria-label="当前帧" defaultValue="15" className="mr-[4px] h-5 w-[73px] rounded-[3px] bg-[#545454] text-center outline-none" />
          <IconButton name="stopwatch" label="使用预览范围" className="rounded-l-[3px] bg-[#4a4a4a]" />
          <label className="flex h-5 w-[86px] items-center bg-[#545454] pl-[14px] pr-[14px] whitespace-nowrap">起始<input defaultValue="1" className="w-full min-w-0 bg-transparent text-right outline-none" /></label>
          <label className="flex h-5 w-[86px] items-center rounded-r-[3px] bg-[#545454] pl-[14px] pr-[14px] whitespace-nowrap">结束<input defaultValue="300" className="w-full min-w-0 bg-transparent text-right outline-none" /></label>
        </div>
      </div>
      <div className="relative flex flex-1 bg-[linear-gradient(#1d1d1d_0_23px,#303030_23px)] pl-[11px] pr-[12px]">
        <div className="absolute bottom-0 left-0 top-[23px] w-[192px] border-r border-[#151515] bg-[#232323]" />
        <div className="absolute bottom-[1px] left-[8px] right-[145px] flex h-[10px] items-center justify-between rounded-full bg-[#4f4f4f] px-[3px]">
          <i className="size-[6px] rounded-full bg-[#303030]" /><i className="size-[6px] rounded-full bg-[#303030]" />
        </div>
        <div className="relative flex flex-1">
          {FRAMES.map((f) => (
            <div key={f} className="flex min-w-0 flex-1 flex-col items-center text-[#a0a0a0]">
              <span className="h-[23px] leading-6">{f}</span>
              <span className={`w-px ${f >= 250 ? 'h-[31px]' : 'h-[21px]'} ${f > 0 ? 'bg-[#1a1a1a]' : 'bg-[#1f1f1f]'}`} />
            </div>
          ))}
          <div className="absolute inset-y-0 flex w-[26px] -translate-x-1/2 flex-col items-center pt-[2px]" style={{ left: framePos(15) }}>
            <span className="h-[18px] w-full rounded-[4px] bg-[#4772b3] text-center leading-[18px] font-semibold text-white">15</span>
            <span className="w-[2px] flex-1 bg-[#4f7fc8]" />
          </div>
        </div>
        <Icon name="left" size={11} className="absolute right-0 top-[17px] text-[#888]" />
      </div>
      <kbd className="absolute left-1 top-[35px] h-7 w-[98px] bg-[#0a0c10]/90 pl-[3px] font-['Liberation_Sans',Arial,sans-serif] text-2xl leading-[25px] whitespace-nowrap text-white">Shift + d</kbd>
    </section>
  );
}

/* ---------- outliner ---------- */

type Extra = [icon: string, color: string];
type Row = {
  name: string;
  depth: number;
  icon: string;
  open?: boolean;
  leaf?: boolean;
  dot?: boolean;
  check?: boolean;
  dim?: boolean;
  active?: boolean;
  noSelect?: boolean;
  count?: string;
  data?: Extra[];
};

const MESH: Extra = ['mesh', 'text-[#1fc08a]'];
const WRENCH: Extra = ['wrench', 'text-[#5f74c8]'];
const TRI: Extra = ['tri', 'text-[#d9884a]'];
const BENDY: Extra = ['bendy', 'text-[#9a9a9a]'];

const ROWS: Row[] = [
  { name: '月亮', depth: 1, icon: 'collection', check: true, dim: true, data: [TRI] },
  { name: '房间', depth: 1, icon: 'collection', open: true, check: true },
  { name: 'dia电视', depth: 2, icon: 'tri', dot: true, data: [WRENCH, MESH] },
  { name: '地面.001', depth: 2, icon: 'tri', dot: true, data: [MESH] },
  { name: '墙', depth: 2, icon: 'tri', dot: true, data: [MESH] },
  { name: '墙.001', depth: 2, icon: 'tri', dot: true, data: [MESH] },
  { name: '墙.002', depth: 2, icon: 'tri', dot: true, data: [MESH] },
  { name: '墙.003', depth: 2, icon: 'tri', dot: true, data: [BENDY, WRENCH, ['grid9', 'text-[#b0b0b0]'], MESH] },
  { name: '洞洞', depth: 2, icon: 'tri', dot: true, data: [WRENCH, MESH] },
  { name: '空物体.001', depth: 2, icon: 'imageFill', noSelect: true, data: [['imageLine', 'text-[#c2566a]']] },
  { name: '窗口', depth: 2, icon: 'tri', dot: true, data: [MESH] },
  { name: '窗户', depth: 2, icon: 'tri', dot: true, data: [BENDY, WRENCH, MESH, TRI] },
  { name: '窗户控制', depth: 2, icon: 'empty', leaf: true },
  { name: '门口', depth: 2, icon: 'tri', dot: true, data: [MESH] },
  { name: '电脑桌', depth: 1, icon: 'collection', open: true, check: true, active: true },
  { name: '机箱', depth: 2, icon: 'collection', check: true, count: '31', data: [['empty', 'text-[#d9884a]'], TRI] },
  { name: '圆环.004', depth: 2, icon: 'tri', dot: true, data: [WRENCH, MESH, TRI] },
];

function OutlinerRow({ row, odd }: { row: Row; odd: boolean }) {
  return (
    <li className={`flex h-5 items-center pr-[11px] ${odd ? 'bg-[#2b2b2b]' : 'bg-[#282828]'} ${row.active ? 'font-medium text-white' : 'text-[#c4c4c4]'}`}>
      <span className="flex w-5 justify-center">{row.dot && <i className="size-1 rounded-full bg-[#e0e0e0]" />}</span>
      {row.depth === 2 && <span className="ml-[9px] h-full w-[10px] border-l border-[#555]" />}
      <button type="button" aria-label={`展开 ${row.name}`} className="flex w-5 justify-center text-[#a0a0a0]">
        {!row.leaf && <Icon name={row.open ? 'down' : 'right'} size={12} className={row.dim ? 'opacity-60' : ''} />}
      </button>
      <span className={`flex size-5 items-center justify-center rounded-[3px] ${row.active ? 'bg-[#505050]' : ''}`}>
        <Icon name={row.icon} className={row.icon === 'collection' ? (row.dim ? 'text-[#7a7a7a]' : 'text-[#eee]') : 'text-[#e09050]'} />
      </span>
      <span className={`ml-1 whitespace-nowrap ${row.dim ? 'text-[#6e6e6e]' : ''}`}>{row.name}</span>
      <span className="relative ml-6 flex gap-[6px]">
        {row.data?.map(([n, c]) => <Icon key={n} name={n} className={`${c} ${row.dim ? 'opacity-60' : ''}`} />)}
        {row.count && <b className="absolute -bottom-1 -right-1 text-[9px] font-medium text-[#ddd]">{row.count}</b>}
      </span>
      <span className="ml-auto flex items-center gap-[6px] text-[#ececec]">
        {row.check && (
          <label className="relative flex">
            <input type="checkbox" defaultChecked aria-label={row.name} className="mr-px size-3 appearance-none rounded-[2px] bg-[#eee]" />
            <svg width="12" height="12" viewBox="0 0 12 12" fill="none" stroke="#222" strokeWidth="1.8" className="pointer-events-none absolute"><path d="M2.500 6l2.500 2.500L9.500 3.500" /></svg>
          </label>
        )}
        <Icon name={row.noSelect ? 'cursorLine' : 'cursor'} className={row.dim ? 'text-[#4a4a4a]' : row.noSelect ? 'text-[#8a8a8a]' : ''} />
        <Icon name={row.dim ? 'eyeClosed' : 'eye'} className={row.dim ? 'text-[#3c3c3c]' : ''} />
        <Icon name="monitor" className={row.dim ? 'text-[#3c3c3c]' : ''} />
        <Icon name={row.dim ? 'cameraLine' : 'camera'} className={row.dim ? 'text-[#4a4a4a]' : ''} />
      </span>
    </li>
  );
}

function SearchBox({ className }: { className: string }) {
  return (
    <label className={`flex h-[18px] items-center gap-[6px] rounded-[3px] bg-[#1d1d1d] pl-1 ring-1 ring-[#333] ring-inset ${className}`}>
      <Icon name="search" className="text-[#d0d0d0]" />
      <input type="text" aria-label="搜索" placeholder="搜索" className="w-full min-w-0 bg-transparent outline-none placeholder:text-[#5c5c5c]" />
    </label>
  );
}

function Outliner() {
  return (
    <section className="flex h-[380px] shrink-0 flex-col overflow-hidden rounded-[4px] border border-[#383838] bg-[#282828]">
      <div className="flex h-6 shrink-0 items-center px-[7px] pb-px text-[#e0e0e0]">
        <Drop name="outliner" label="编辑器类型" className="w-[31px]" />
        <Drop name="images" label="显示模式" className="ml-[6px] w-[31px]" />
        <SearchBox className="ml-5 w-[119px]" />
        <Drop name="funnel" label="过滤" className="ml-auto w-[32px]" />
        <IconButton name="newCollection" label="新建集合" className="ml-[6px] rounded-[3px] bg-[#4a4a4a]" />
      </div>
      <ul>
        <li className="flex h-5 items-center pl-[22px] text-[#c4c4c4]">
          <Icon name="collection" className="mr-[7px] text-[#ddd]" />场景集合
        </li>
        {ROWS.map((r, i) => <OutlinerRow key={r.name} row={r} odd={i % 2 === 0} />)}
      </ul>
    </section>
  );
}

/* ---------- properties editor ---------- */

const TABS: [icon: string, color: string, gap: boolean][] = [
  ['tools', 'text-[#b0b0b0]', false],
  ['render', 'text-[#b0b0b0]', true],
  ['output', 'text-[#b0b0b0]', false],
  ['images', 'text-[#b0b0b0]', false],
  ['scene', 'text-[#b0b0b0]', false],
  ['world', 'text-[#b84a60]', false],
  ['collectionLine', 'text-[#d8d8d8]', true],
  ['object', 'text-[#d9884a]', true],
  ['wrenchFill', 'text-[#5f80d8]', false],
  ['particles', 'text-[#7580b8]', false],
  ['physics', 'text-[#6f8cc0]', false],
  ['constraint', 'text-[#7590d0]', false],
  ['mesh', 'text-[#1fd09a]', false],
  ['material', 'text-[#b8566a]', false],
];

const CLOSED_PANELS = ['UV 贴图', '颜色属性', '属性', '纹理空间', '重构网格', '几何数据', '动画', '自定义属性'];

function ListPanel({ title, empty, children }: { title: string; empty?: boolean; children?: React.ReactNode }) {
  return (
    <section className="shrink-0 rounded-[3px] bg-[#3d3d3d] px-2 pb-[9px] text-[#dedede]">
      <h2 className="flex h-[26px] items-center gap-px"><Icon name="down" size={12} />{title}<Grip className="ml-auto mr-[-2px] text-[#8a8a8a]" /></h2>
      <div className="mt-[9px] flex items-start">
        <div className="relative mr-[11px] flex h-[77px] flex-1 items-end rounded-[3px] bg-[#2b2b2b] pb-1 pl-[7px]">
          <Icon name="play" size={12} className="text-[#ccc]" />
          <Grip className="mx-auto mb-[3px] text-[#ccc]" />
        </div>
        <div className="flex flex-col gap-px">
          <IconButton name="plus" label={`添加${title}`} className={empty ? 'rounded-t-[3px] bg-[#434343] text-[#4a4a4a]' : 'rounded-t-[3px] bg-[#545454] text-[#eee]'} />
          <IconButton name="minus" label={`移除${title}`} className="rounded-b-[3px] bg-[#434343] text-[#4f4f4f]" />
          <Drop label={`${title}选项`} className="mt-[7px] w-[19px]" />
        </div>
      </div>
      {children}
    </section>
  );
}

function Properties() {
  return (
    <section className="mt-[2px] flex min-h-0 flex-1 flex-col overflow-hidden rounded-[4px] border border-b-0 border-[#383838] bg-[#303030]">
      <div className="flex h-6 shrink-0 items-center pl-[11px] pr-[9px] text-[#e0e0e0]">
        <button type="button" aria-label="编辑器类型" className="flex items-center gap-1"><Icon name="props" /><Icon name="down" size={11} /></button>
        <div className="flex flex-1 justify-center pr-1"><SearchBox className="w-[116px]" /></div>
        <Drop label="选项" className="w-[17px]" />
      </div>
      <div className="flex min-h-0 flex-1">
        <nav className="flex w-7 shrink-0 flex-col bg-[#1d1d1d] pl-[2px] pt-2">
          {TABS.map(([n, c, gap]) => (
            <button key={n} type="button" aria-label={n} className={`flex h-7 shrink-0 items-center justify-center rounded-l-[4px] ${c} ${gap ? 'mt-2' : ''} ${n === 'mesh' ? 'bg-[#303030]' : ''}`}>
              <Icon name={n} />
            </button>
          ))}
        </nav>
        <div className="flex min-w-0 flex-1 flex-col overflow-hidden pl-2 pr-[6px] text-[#e0e0e0]">
          <div className="flex h-[34px] shrink-0 items-center">
            <Icon name="object" className="text-[#ddd]" /><span className="ml-[10px]">平面.001</span>
            <Icon name="right" size={12} className="ml-[14px]" />
            <Icon name="mesh" className="ml-[7px]" /><span className="ml-[10px]">平面.010</span>
            <Icon name="pin" className="ml-auto mr-[2px] text-[#888]" />
          </div>
          <div className="mt-[10px] flex shrink-0">
            <Drop name="mesh" label="浏览网格数据" className="w-[30px]" />
            <input aria-label="网格数据名称" defaultValue="平面.010" className="h-[18px] min-w-0 flex-1 bg-[#1d1d1d] pl-[6px] outline-none" />
            <IconButton name="shield" label="伪用户" className="rounded-r-[3px] bg-[#4f4f4f] text-[#8a8a8a]" />
          </div>
          <div className="mt-3 flex flex-col gap-[2px]">
            <ListPanel title="顶点组" />
            <ListPanel title="形态键" empty>
              <label className="mt-2 flex h-4 items-center gap-1"><input type="checkbox" className="size-3 appearance-none rounded-[2px] bg-[#545454]" />添加静置位置</label>
            </ListPanel>
            {CLOSED_PANELS.map((p) => (
              <button type="button" key={p} className="flex h-[25px] shrink-0 items-center gap-px rounded-[3px] bg-[#3d3d3d] px-2">
                <Icon name="right" size={12} className="text-[#b0b0b0]" />{p}<Grip className="ml-auto mr-[-2px] text-[#8a8a8a]" />
              </button>
            ))}
          </div>
        </div>
      </div>
    </section>
  );
}

/* ---------- bottom ---------- */

function StatusBar() {
  return (
    <footer className="flex h-[29px] shrink-0 items-center bg-[#181818] pl-2 pr-[11px] pb-[6px] text-[#8f8f8f]">
      <Icon name="mouse" size={17} />
      <span className="ml-px">取消</span>
      <span className="ml-auto flex gap-1">
        {['平面.001', '点:1/67', '边:0/66', '面:0/14', '三角:38', '物体:1/248', '4.4.3'].map((s, i) => (
          <React.Fragment key={s}>{i > 0 && <span>|</span>}<span>{s}</span></React.Fragment>
        ))}
      </span>
    </footer>
  );
}

function Watermark() {
  return (
    <div className="relative h-[42px] shrink-0 bg-black">
      <div className="absolute -top-2 left-[11px] flex items-center gap-2 text-[#606060]">
        <svg width="40" height="40" viewBox="0 0 40 40" aria-hidden="true">
          <rect width="39" height="38" rx="6" fill="#5c5c5c" />
          <path d="M12 7c4-3 6 3 10 4 5 1 12 2 12 8s-6 6-11 8-9 7-12 4-1-7-1-12-1-10 2-12z" fill="#0a0a0a" />
          <circle cx="5" cy="19" r="2.5" fill="#0a0a0a" />
          <path d="M14 17l4 4M14 24l7-10M20 16h9M25 16l-3 9" stroke="#666" strokeWidth="2.5" fill="none" />
        </svg>
        <span className="text-4xl leading-9 font-bold">tafe.cc</span>
      </div>
    </div>
  );
}

export default function App() {
  return (
    <div lang="zh-CN" className="flex h-screen flex-col overflow-hidden bg-black font-['Inter','Noto_Sans_CJK_SC',sans-serif] text-[11px] leading-4">
      <TitleBar />
      <MenuBar />
      <main className="flex min-h-0 flex-1 gap-[2px] bg-[#151515]">
        <div className="flex min-w-0 flex-1 flex-col">
          <Viewport />
          <Timeline />
        </div>
        <aside className="flex w-[335px] shrink-0 flex-col pr-px pt-px">
          <Outliner />
          <Properties />
        </aside>
      </main>
      <StatusBar />
      <Watermark />
    </div>
  );
}
